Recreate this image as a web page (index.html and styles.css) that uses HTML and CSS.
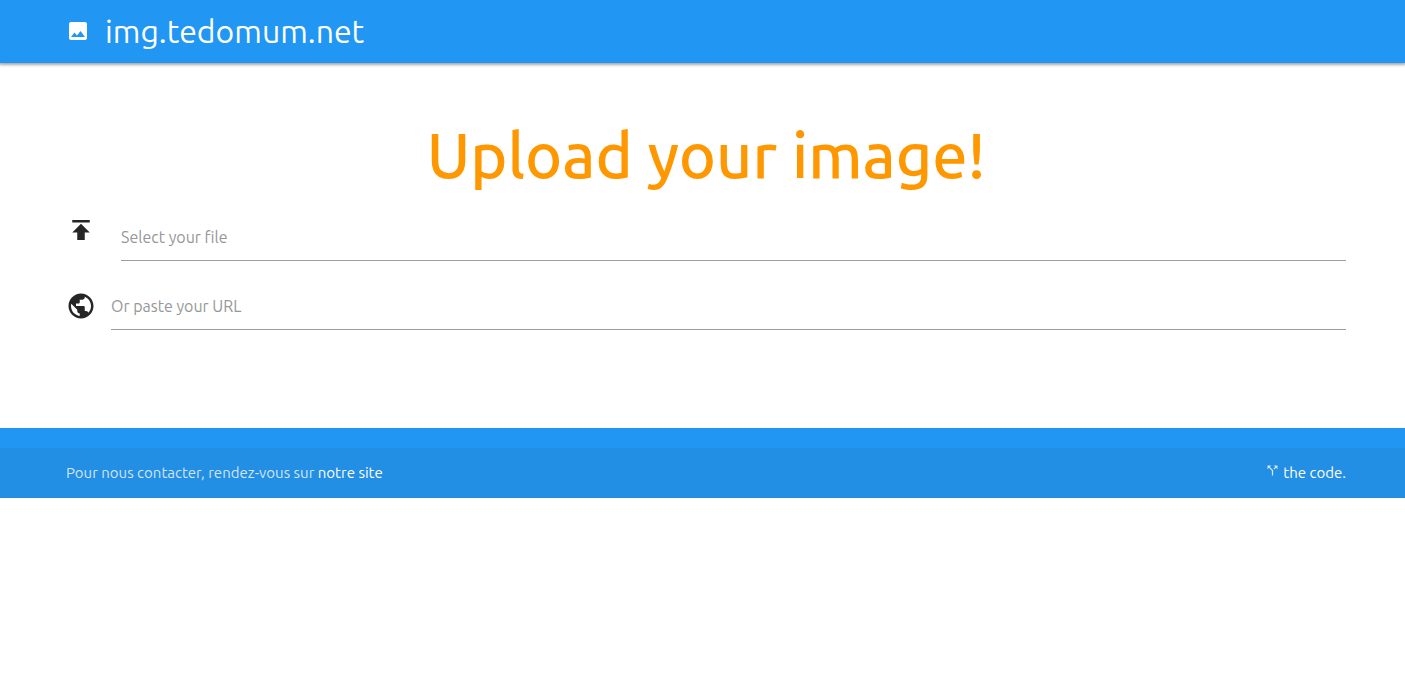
FILE: index.html
```
<!DOCTYPE html>
<html lang="en">
<head>
<meta charset="utf-8">
<meta name="viewport" content="width=device-width, initial-scale=1">
<title>img.tedomum.net</title>
<link rel="stylesheet" href="styles.css">
</head>

<body>
<nav class="topnav">
  <div class="container">
    <a href="/" class="brand">
      <svg class="brand-icon" viewBox="0 0 24 24" aria-hidden="true"><path d="M21 19V5c0-1.100-.9-2-2-2H5c-1.100 0-2 .9-2 2v14c0 1.100.9 2 2 2h14c1.100 0 2-.9 2-2zM8.500 13.500l2.500 3.010L14.500 12l4.500 6H5l3.500-4.500z"/></svg>
      <span>img.tedomum.net</span>
    </a>
  </div>
</nav>

<main class="container">
  <h1>Upload your image!</h1>

  <form class="upload">
    <div class="row file-row">
      <svg class="field-icon" viewBox="0 0 24 24" aria-hidden="true"><path d="M5 4v2h14V4H5zm0 10h4v6h6v-6h4l-7-7-7 7z"/></svg>
      <input type="text" id="file" name="file" class="field" aria-label="Select your file" placeholder="Select your file">
    </div>
    <div class="row url-row">
      <svg class="field-icon" viewBox="0 0 24 24" aria-hidden="true"><path d="M12 2C6.480 2 2 6.480 2 12s4.480 10 10 10 10-4.480 10-10S17.520 2 12 2zm-1 17.930c-3.950-.49-7-3.850-7-7.930 0-.62.08-1.210.21-1.790L9 15v1c0 1.100.9 2 2 2v1.930zm6.900-2.540c-.26-.81-1-1.390-1.900-1.390h-1v-3c0-.55-.45-1-1-1H8v-2h2c.55 0 1-.45 1-1V7h2c1.100 0 2-.9 2-2v-.41c2.930 1.190 5 4.060 5 7.410 0 2.080-.8 3.970-2.100 5.390z"/></svg>
      <input type="text" id="url" name="url" class="field" aria-label="Or paste your URL" placeholder="Or paste your URL">
    </div>
  </form>
</main>

<footer>
  <div class="copyright">
    <div class="container foot-row">
      <span>Pour nous contacter, rendez-vous sur <a href="#">notre site</a></span>
      <span class="code"><a href="#"><svg class="fork-icon" viewBox="0 0 24 24" aria-hidden="true"><path d="M14 4l2.290 2.290-2.880 2.880 1.420 1.420 2.880-2.880L20 10V4zm-4 0H4v6l2.290-2.290 4.710 4.700V20h2v-8.410l-5.290-5.300z"/></svg> the code.</a></span>
    </div>
  </div>
</footer>
</body>
</html>
```

FILE: styles.css
```
body {
  margin: 0;
  background-color: white;
  color: rgba(0, 0, 0, 0.87);
  font-family: Ubuntu, "Noto Sans", sans-serif;
  font-size: 15px;
  line-height: 22px;
}

a {
  color: white;
  text-decoration: none;
}

.container {
  margin: 0 59px 0 66px;
}

/* top bar */
.topnav {
  background-color: #2196f3;
  box-shadow: 0 1px 2px 1px rgba(0, 0, 0, 0.25), 0 1px 5px 0 rgba(0, 0, 0, 0.16);
}

.brand {
  display: inline-flex;
  align-items: center;
  height: 62px;
  padding-bottom: 1px;
  font-size: 32px;
}

.brand-icon {
  width: 24px;
  height: 24px;
  margin-right: 15px;
  fill: white;
}

/* upload form */
h1 {
  margin: 57px 0 25px;
  color: #ff9800;
  font-size: 63px;
  font-weight: 500;
  line-height: 70px;
  text-align: center;
}

.row {
  display: flex;
}

.field-icon {
  width: 30px;
  height: 30px;
  fill: #262626;
}

.field {
  flex: 1;
  box-sizing: border-box;
  height: 46px;
  margin: 0 0 0 15px;
  padding: 0 0 2px;
  border: none;
  border-bottom: 1px solid #9e9e9e;
  background: transparent;
  font-family: inherit;
  font-size: 16px;
  outline: none;
}

.field::placeholder {
  color: #979797;
  opacity: 1;
}

.file-row .field {
  margin-left: 25px;
}

.url-row {
  align-items: center;
  margin-top: 23px;
}

.url-row .field-icon {
  padding-bottom: 2px;
}

/* footer */
footer {
  margin-top: 98px;
  padding-top: 20px;
  background-color: #2196f3;
}

.copyright {
  background-color: rgba(51, 51, 51, 0.08);
  color: rgba(255, 255, 255, 0.8);
}

.foot-row {
  display: flex;
  justify-content: space-between;
  align-items: center;
  height: 50px;
}

.fork-icon {
  width: 15px;
  height: 15px;
  fill: rgba(255, 255, 255, 0.8);
}
```
